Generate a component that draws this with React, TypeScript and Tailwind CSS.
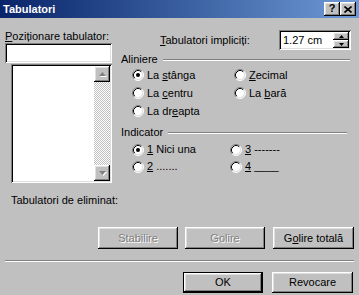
import React from "react";

const raised =
  "shadow-[inset_-1px_-1px_#000,inset_1px_1px_#fff,inset_-2px_-2px_#808080,inset_2px_2px_#dfdfdf]";
const sunken =
  "shadow-[inset_1px_1px_#808080,inset_-1px_-1px_#fff,inset_2px_2px_#000,inset_-2px_-2px_#dfdfdf]";
const disabledText = "text-[#808080] [text-shadow:1px_1px_0_#fff]";

function U({ children }: { children: React.ReactNode }) {
  return <span className="underline underline-offset-[1px] decoration-1">{children}</span>;
}

function Radio({ checked }: { checked?: boolean }) {
  return (
    <svg width="12" height="12" viewBox="0 0 12 12" className="shrink-0">
      <circle cx="6" cy="6" r="5" fill="#fff" />
      <path d="M2.11 9.89A5.5 5.5 0 0 1 9.89 2.11" stroke="#808080" fill="none" />
      <path d="M9.89 2.11A5.5 5.5 0 0 1 2.11 9.89" stroke="#fff" fill="none" />
      <path d="M2.82 9.18A4.5 4.5 0 0 1 9.18 2.82" stroke="#000" fill="none" />
      <path d="M9.18 2.82A4.5 4.5 0 0 1 2.82 9.18" stroke="#dfdfdf" fill="none" />
      {checked && <circle cx="6" cy="6" r="2" fill="#000" />}
    </svg>
  );
}

function RadioItem({ checked, children, h }: { checked?: boolean; children: React.ReactNode; h: string }) {
  return (
    <div className={`flex items-center ${h}`}>
      <Radio checked={checked} />
      <span className="ml-[3px] whitespace-pre">{children}</span>
    </div>
  );
}

function GroupHeader({ label, mr }: { label: string; mr: string }) {
  return (
    <div className="flex items-center h-[13px]">
      <span>{label}</span>
      <div className={`flex-1 ml-[5px] ${mr} h-[2px] border-t border-t-[#808080] border-b border-b-white`} />
    </div>
  );
}

function Btn({
  children,
  w,
  disabled,
  def,
  h = "h-[22px]",
}: {
  children: React.ReactNode;
  w: string;
  disabled?: boolean;
  def?: boolean;
  h?: string;
}) {
  return (
    <div
      className={`${w} ${h} flex items-center justify-center ${def ? "border border-black" : ""}`}
    >
      <div className={`w-full h-full flex items-center justify-center ${raised} ${disabled ? disabledText : ""}`}>
        {children}
      </div>
    </div>
  );
}

function Arrow({ up, color = "#000" }: { up?: boolean; color?: string }) {
  return (
    <svg width="7" height="4" viewBox="0 0 7 4">
      {up ? <path d="M3.5 0L7 4H0Z" fill={color} /> : <path d="M0 0H7L3.5 4Z" fill={color} />}
    </svg>
  );
}

function ScrollArrow({ up }: { up?: boolean }) {
  return (
    <div className={`w-[16px] h-[16px] bg-[#c0c0c0] ${raised} flex items-center justify-center`}>
      <div className="relative w-[7px] h-[4px]">
        <div className="absolute left-[1px] top-[1px]">
          <Arrow up={up} color="#fff" />
        </div>
        <div className="absolute left-0 top-0">
          <Arrow up={up} color="#808080" />
        </div>
      </div>
    </div>
  );
}

function Spinner() {
  return (
    <div className={`w-[72px] h-[20px] bg-white ${sunken} flex items-stretch p-[2px]`}>
      <div className="flex-1 flex items-center pl-[2px]">1.27 cm</div>
      <div className="w-[16px] flex flex-col">
        <div className={`flex-1 bg-[#c0c0c0] ${raised} flex items-center justify-center`}>
          <svg width="5" height="3" viewBox="0 0 5 3">
            <path d="M2.5 0L5 3H0Z" fill="#000" />
          </svg>
        </div>
        <div className={`flex-1 bg-[#c0c0c0] ${raised} flex items-center justify-center`}>
          <svg width="5" height="3" viewBox="0 0 5 3">
            <path d="M0 0H5L2.5 3Z" fill="#000" />
          </svg>
        </div>
      </div>
    </div>
  );
}

export default function App() {
  return (
    <div
      className="w-[359px] h-[295px] bg-[#c0c0c0] overflow-hidden flex flex-col text-black text-[11px] leading-[13px]"
      style={{ fontFamily: '"Liberation Sans", Arial, sans-serif' }}
    >
      {/* Title bar */}
      <div className="h-[18px] shrink-0 flex items-center pl-[3px] pr-[3px] bg-gradient-to-r from-[#0a246a] to-[#6f9ad6]">
        <span className="text-white font-bold text-[11px]">Tabulatori</span>
        <div className="ml-auto flex">
          <div className={`w-[16px] h-[14px] bg-[#c0c0c0] ${raised} flex items-center justify-center font-bold text-[11px] leading-none pb-[1px]`}>
            ?
          </div>
          <div className={`w-[16px] h-[14px] bg-[#c0c0c0] ${raised} flex items-center justify-center`}>
            <svg width="8" height="7" viewBox="0 0 8 7">
              <path d="M0.5 0.5L7.5 6.5M7.5 0.5L0.5 6.5" stroke="#000" strokeWidth="1.6" />
            </svg>
          </div>
        </div>
      </div>

      {/* Main two columns */}
      <div className="flex pt-[12px] shrink-0">
        <div className="ml-[5px] w-[107px] flex flex-col">
          <div className="h-[13px] whitespace-nowrap">
            <U>P</U>oziționare tabulator:
          </div>
          <div className={`h-[20px] bg-white ${sunken}`} />
          <div className={`ml-[6px] w-[101px] h-[119px] mt-[1px] bg-white ${sunken} flex justify-end p-[2px]`}>
            <div className="w-[16px] flex flex-col">
              <ScrollArrow up />
              <div className="flex-1 bg-[image:conic-gradient(#ffffff_25%,#c0c0c0_0_50%,#ffffff_0_75%,#c0c0c0_0)] bg-[length:2px_2px]" />
              <ScrollArrow />
            </div>
          </div>
        </div>

        <div className="ml-[9px] w-[231px] flex flex-col">
          <div className="flex items-center h-[20px]">
            <span className="ml-[39px] mt-[1px]">
              <U>T</U>abulatori impliciți:
            </span>
            <div className="ml-auto mr-[1px]">
              <Spinner />
            </div>
          </div>

          <div className="mt-[3px]">
            <GroupHeader label="Aliniere" mr="mr-[2px]" />
          </div>
          <div className="grid grid-cols-[102px_1fr] pl-[11px]">
            <RadioItem checked h="h-[18px]">
              La <U>s</U>tânga
            </RadioItem>
            <RadioItem h="h-[18px]">
              <U>Z</U>ecimal
            </RadioItem>
            <RadioItem h="h-[18px]">
              La <U>c</U>entru
            </RadioItem>
            <RadioItem h="h-[18px]">
              La <U>b</U>ară
            </RadioItem>
            <RadioItem h="h-[18px]">
              La dr<U>e</U>apta
            </RadioItem>
          </div>

          <div className="mt-[6px]">
            <GroupHeader label="Indicator" mr="mr-[5px]" />
          </div>
          <div className="grid grid-cols-[98px_1fr] pl-[11px] mt-[2px]">
            <RadioItem checked h="h-[17px]">
              <U>1</U> Nici una
            </RadioItem>
            <RadioItem h="h-[17px]">
              <U>3</U> -------
            </RadioItem>
            <RadioItem h="h-[17px]">
              <U>2</U> .......
            </RadioItem>
            <RadioItem h="h-[17px]">
              <U>4</U> ____
            </RadioItem>
          </div>
        </div>
      </div>

      <div className="mt-[11px] ml-[11px] h-[13px] shrink-0">Tabulatori de eliminat:</div>

      <div className="mt-[20px] ml-[98px] flex shrink-0">
        <Btn w="w-[80px]" disabled>
          Stabilire
        </Btn>
        <div className="w-[7px]" />
        <Btn w="w-[80px]" disabled>
          Golire
        </Btn>
        <div className="w-[8px]" />
        <Btn w="w-[81px]">
          G<U>o</U>lire totală
        </Btn>
      </div>

      <div className="mt-[11px] mx-[5px] h-[2px] shrink-0 border-t border-t-[#808080] border-b border-b-white" />

      <div className="mt-[10px] ml-[183px] flex shrink-0">
        <Btn w="w-[80px]" def h="h-[21px]">
          OK
        </Btn>
        <div className="w-[9px]" />
        <Btn w="w-[81px]" h="h-[21px]">
          Revocare
        </Btn>
      </div>
    </div>
  );
}
